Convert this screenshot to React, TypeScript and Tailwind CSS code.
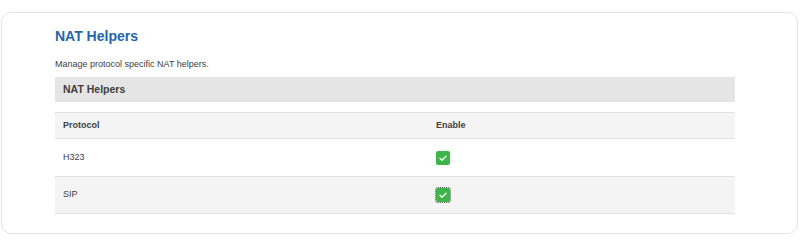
const rows = [
  { name: "H323", enabled: true, focused: false },
  { name: "SIP", enabled: true, focused: true },
];

const Check = ({ focused }: { focused: boolean }) => (
  <span
    className={`flex h-[14px] w-[14px] items-center justify-center rounded-[2px] bg-[#3db54a] ${
      focused ? "outline outline-1 outline-dotted outline-[#555]" : ""
    }`}
  >
    <svg width="10" height="10" viewBox="0 0 10 10" fill="none">
      <path d="M2 5.2l2 2 4-4" stroke="white" strokeWidth="1.3" strokeLinecap="round" strokeLinejoin="round" />
    </svg>
  </span>
);

export default function App() {
  return (
    <div className="bg-white pt-[12px] pl-[1px] pr-[2px] font-['Liberation_Sans',Arial,sans-serif]">
      <div className="h-[222px] rounded-[10px] border border-[#e3e3e3] pl-[53px]">
        <div className="w-[680px]">
          <h1 className="mt-[15px] text-[14px] font-bold leading-[16px] text-[#2465ad]">NAT Helpers</h1>
          <p className="mt-[14px] text-[9px] leading-[12px] text-[#404040]">Manage protocol specific NAT helpers.</p>
          <div className="mt-[7px] flex h-[25px] items-center bg-[#e5e5e5] px-[8px] text-[10.5px] font-bold text-[#404040]">
            NAT Helpers
          </div>
          <div className="mt-[10px] text-[9px] text-[#404040]">
            <div className="flex h-[27px] items-center border-y border-[#e2e2e2] bg-[#f4f4f4] font-bold">
              <div className="w-[381px] pl-[8px]">Protocol</div>
              <div>Enable</div>
            </div>
            {rows.map((r, i) => (
              <div
                key={r.name}
                className={`flex items-center border-b border-[#e2e2e2] ${i % 2 ? "h-[37px] bg-[#f4f4f4]" : "h-[38px] bg-white"}`}
              >
                <div className="w-[381px] pl-[8px]">{r.name}</div>
                <div>{r.enabled && <Check focused={r.focused} />}</div>
              </div>
            ))}
          </div>
        </div>
      </div>
    </div>
  );
}
